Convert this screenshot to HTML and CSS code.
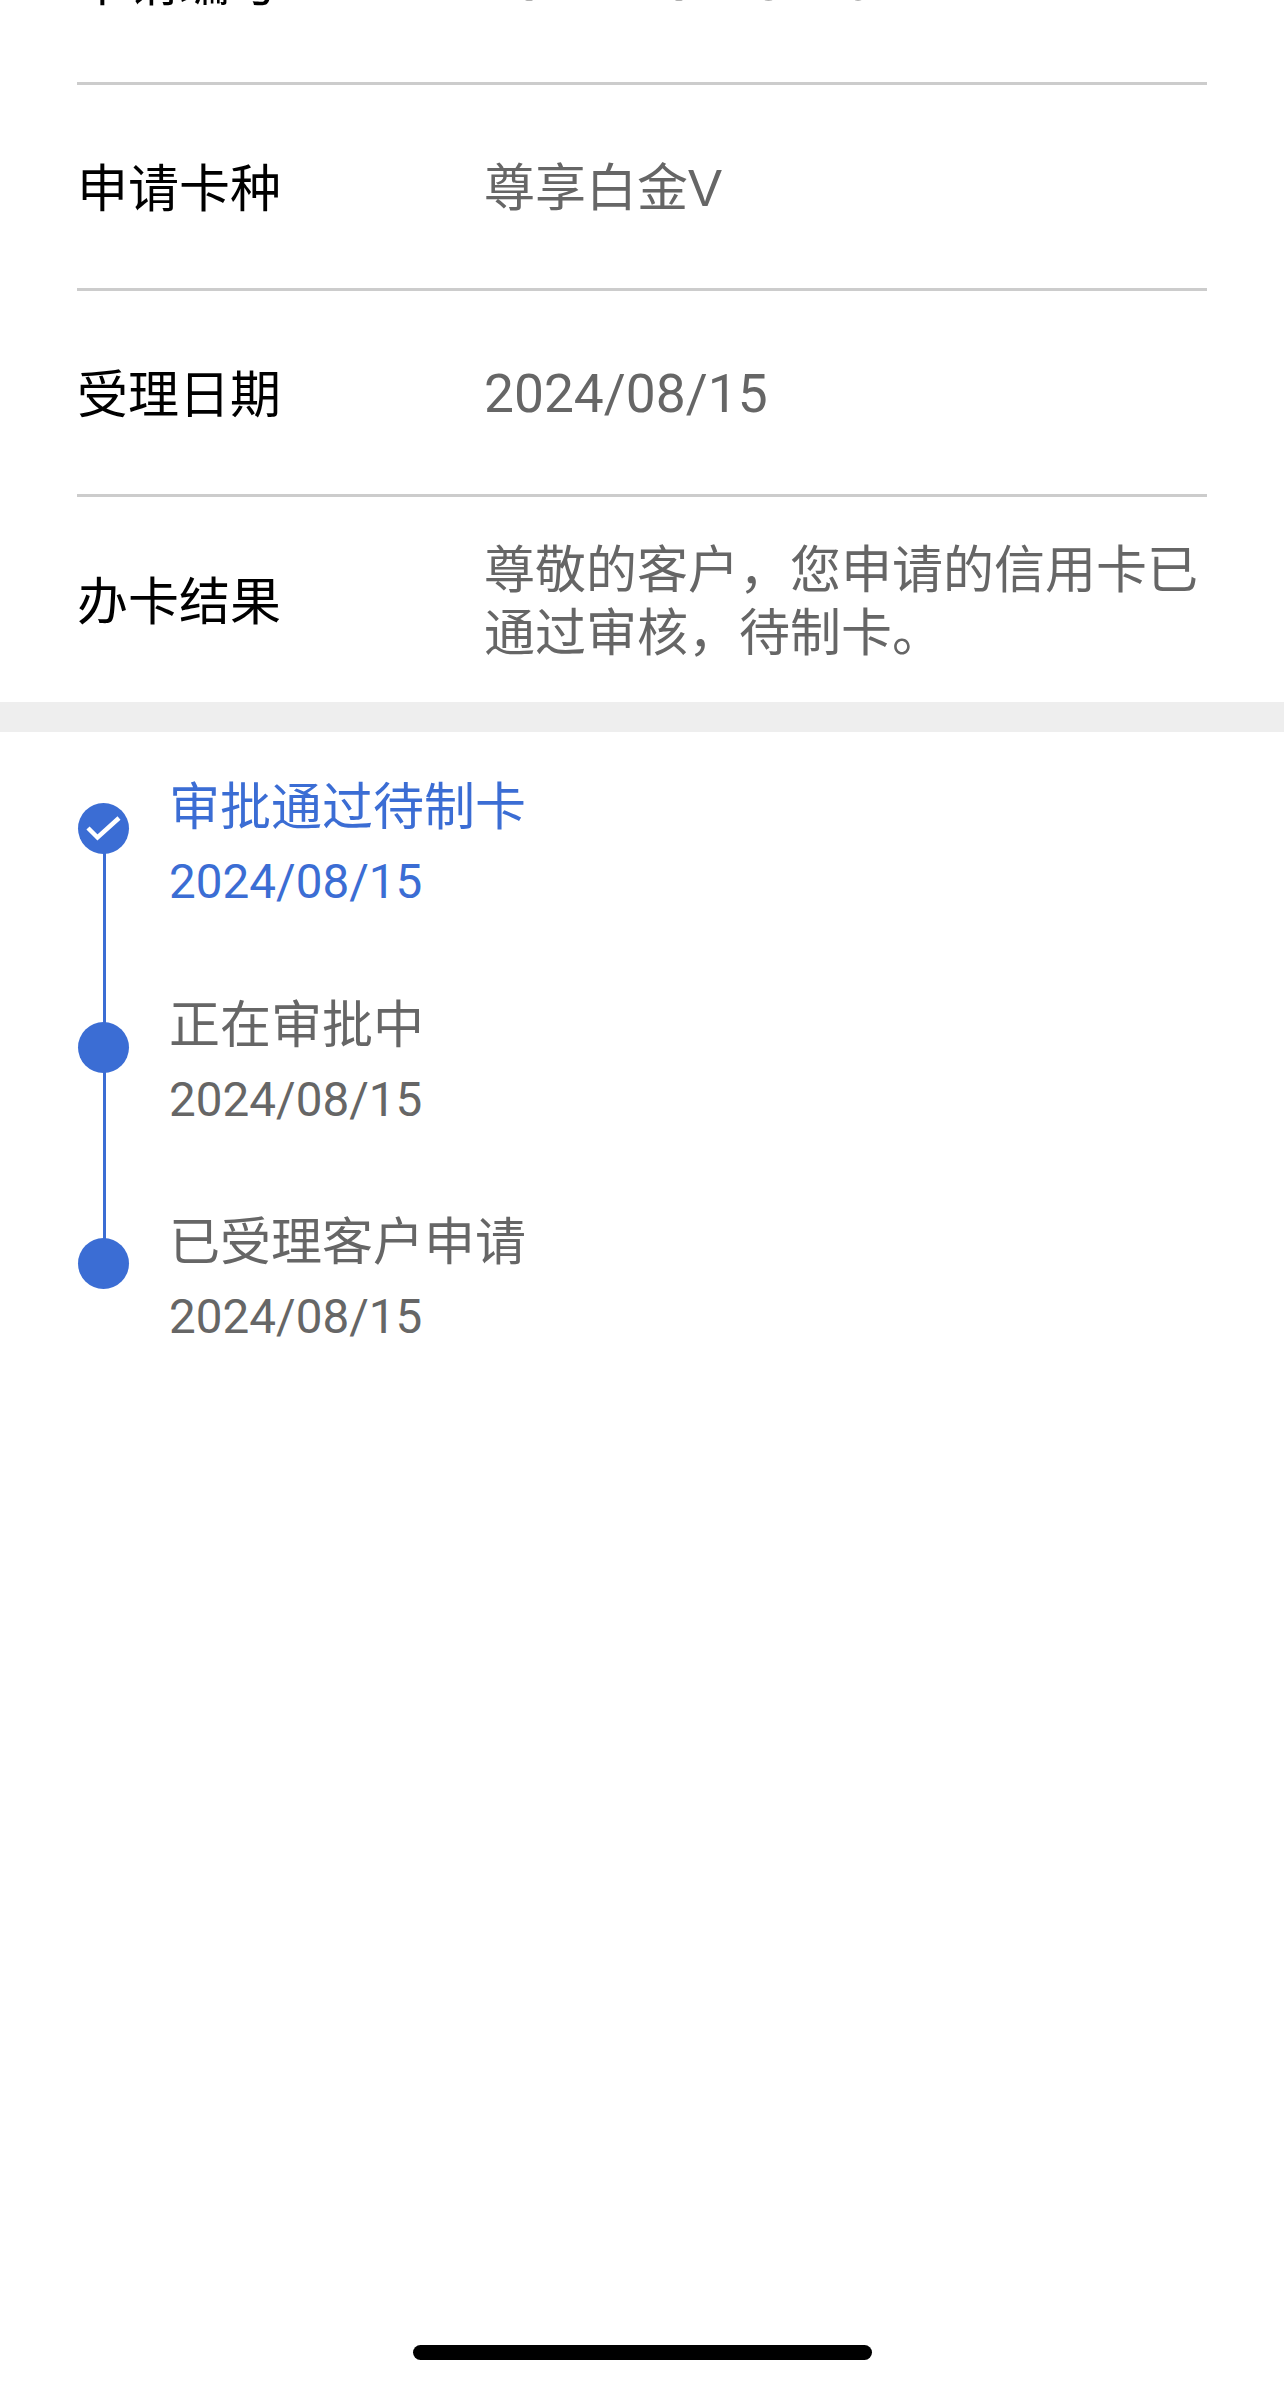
FILE: index.html
```html
<!DOCTYPE html>
<html lang="zh-CN">

<head>
  <meta charset="UTF-8" />
  <meta name="viewport" content="width=device-width, initial-scale=1.0" />
  <title>办卡进度</title>
  <link rel="stylesheet" href="styles.css">
</head>

<body>
  <div class="page">
    <div class="info">
      <div class="row">
        <div class="label">申请编号</div>
        <div class="value num">2024170128143</div>
      </div>
      <div class="row">
        <div class="label">申请卡种</div>
        <div class="value">尊享白金V</div>
      </div>
      <div class="row">
        <div class="label">受理日期</div>
        <div class="value num">2024/08/15</div>
      </div>
      <div class="row row-last">
        <div class="label">办卡结果</div>
        <div class="value">尊敬的客户，您申请的信用卡已通过审核，待制卡。</div>
      </div>
    </div>

    <div class="band"></div>

    <div class="steps">
      <div class="step step-active">
        <div class="dot">
          <svg width="35" height="26" viewBox="0 0 35 26">
            <path d="M2 12 L11.5 21.5 L33 2" fill="none" stroke="#fff" stroke-width="4.5" />
          </svg>
        </div>
        <div class="step-title">审批通过待制卡</div>
        <div class="step-date">2024/08/15</div>
      </div>
      <div class="step step-middle">
        <div class="dot"></div>
        <div class="step-title">正在审批中</div>
        <div class="step-date">2024/08/15</div>
      </div>
      <div class="step step-last">
        <div class="dot"></div>
        <div class="step-title">已受理客户申请</div>
        <div class="step-date">2024/08/15</div>
      </div>
    </div>
  </div>

  <div class="home-bar"></div>
</body>

</html>
```

FILE: styles.css
```css
body {
  font-family: "Liberation Sans", "Noto Sans CJK SC", sans-serif;
  background-color: #fff;
  margin: 0;
  padding: 0;
  height: 2384px;
  overflow: hidden;
  position: relative;
}

/* the page is scrolled, first row is cut off at the top */
.page {
  margin-top: -121px;
}

.info {
  padding: 0 77px;
}

.row {
  display: flex;
  align-items: center;
  height: 203px;
  border-bottom: 3px solid #ccc;
  font-size: 51px;
}

.row-last {
  height: 205px;
  border-bottom: none;
}

.label {
  width: 407px;
  flex-shrink: 0;
  color: #000;
  padding-bottom: 4px;
}

.value {
  color: #666;
  line-height: 63px;
  padding-top: 4px;
}

.num {
  font-family: "Roboto", sans-serif;
  font-size: 53.3px;
}

.band {
  height: 30px;
  background-color: #eee;
}

.steps {
  padding: 46px 77px 0;
}

.step {
  position: relative;
  height: 218px;
  padding-left: 92px;
  color: #666;
}

.step-middle {
  height: 217px;
}

.step-active {
  color: #3b6dd4;
}

.step-title {
  font-size: 51px;
  line-height: 60px;
}

.step-date {
  font-family: "Roboto", sans-serif;
  font-size: 47.6px;
  line-height: 56px;
  margin-top: 16px;
}

.dot {
  position: absolute;
  left: 1px;
  top: 25px;
  width: 51px;
  height: 51px;
  border-radius: 50%;
  background-color: #3b6dd4;
  display: flex;
  align-items: center;
  justify-content: center;
}

.step-middle .dot {
  top: 26px;
}

/* connector between the dots */
.step::before {
  content: "";
  position: absolute;
  left: 26px;
  top: 50px;
  width: 3px;
  height: 217px;
  background-color: #3b6dd4;
}

.step-last::before {
  display: none;
}

.home-bar {
  position: absolute;
  left: 413px;
  top: 2345px;
  width: 459px;
  height: 15px;
  border-radius: 8px;
  background-color: #000;
}
```
